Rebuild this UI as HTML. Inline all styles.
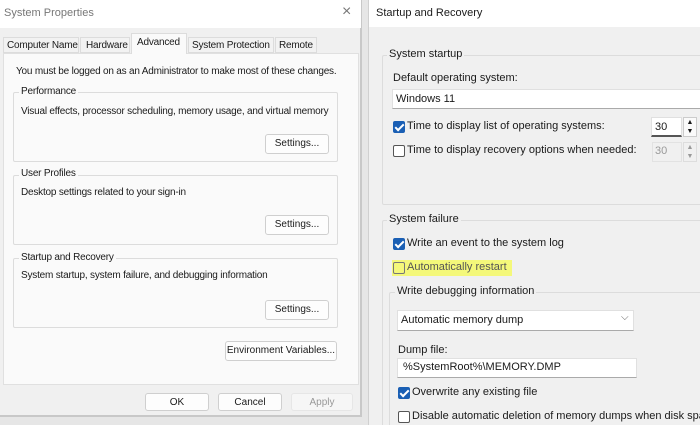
<!DOCTYPE html>
<html style="overflow:hidden;height:425px"><head><style>
*{margin:0;padding:0;box-sizing:border-box}
body{width:700px;height:425px;overflow:hidden;background:#e6e6e6;font-family:"Liberation Sans",sans-serif;position:relative;color:#1a1a1a}
.a{position:absolute;white-space:nowrap}
.l{font-size:10px;letter-spacing:-0.2px}
.r{font-size:11px}
.grp{position:absolute;border:1px solid #dcdcdc;border-radius:2px}
.btn{position:absolute;background:#fdfdfd;border:1px solid #cfcfcf;border-radius:3px;font-size:10px;text-align:center;line-height:17px;white-space:nowrap}
.cb{position:absolute;width:12px;height:12px;border:1px solid #555;border-radius:2px;background:#fff}
.cb.on{background:#1a5fb4;border-color:#1a5fb4}
.cb.on:after{content:"";position:absolute;left:3px;top:0px;width:3px;height:7px;border:solid #fff;border-width:0 2px 2px 0;transform:rotate(45deg)}
.box{position:absolute;background:#fff;border:1px solid #e0e0e0;border-bottom-color:#aaa}
</style></head><body>
<div class="a" style="left:0;top:0;width:362px;height:417px;background:#f0f0f0;border-right:2px solid #c8c8c8;border-bottom:2px solid #c8c8c8"></div>
<div class="a" style="left:0;top:0;width:361px;height:28px;background:#fff"></div>
<div class="a" style="left:4px;top:7px;font-size:11px;color:#777">System Properties</div>
<div class="a" style="left:342px;top:3px;font-size:16px;color:#777">×</div>
<div class="a" style="left:3px;top:53px;width:356px;height:332px;background:#fafafa;border:1px solid #e0e0e0"></div>
<div class="a l" style="left:3px;top:37px;width:76px;height:16px;border:1px solid #dcdcdc;background:#f2f2f2;padding:2px 0 0 3px">Computer Name</div>
<div class="a l" style="left:80px;top:37px;width:50px;height:16px;border:1px solid #dcdcdc;background:#f2f2f2;padding:2px 0 0 5px">Hardware</div>
<div class="a l" style="left:131px;top:33px;width:56px;height:21px;border:1px solid #dcdcdc;border-bottom:none;background:#fafafa;padding:3px 0 0 5px">Advanced</div>
<div class="a l" style="left:188px;top:37px;width:86px;height:16px;border:1px solid #dcdcdc;background:#f2f2f2;padding:2px 0 0 3px">System Protection</div>
<div class="a l" style="left:275px;top:37px;width:42px;height:16px;border:1px solid #dcdcdc;background:#f2f2f2;padding:2px 0 0 3px">Remote</div>
<div class="a l" style="left:16px;top:66px">You must be logged on as an Administrator to make most of these changes.</div>
<div class="grp" style="left:13px;top:92px;width:325px;height:70px"></div>
<div class="a l" style="left:19px;top:86px;background:#fafafa;padding:0 2px">Performance</div>
<div class="a l" style="left:21px;top:106px">Visual effects, processor scheduling, memory usage, and virtual memory</div>
<div class="btn" style="left:265px;top:134px;width:64px;height:20px">Settings...</div>
<div class="grp" style="left:13px;top:175px;width:325px;height:70px"></div>
<div class="a l" style="left:19px;top:168px;background:#fafafa;padding:0 2px">User Profiles</div>
<div class="a l" style="left:21px;top:187px">Desktop settings related to your sign-in</div>
<div class="btn" style="left:265px;top:215px;width:64px;height:20px">Settings...</div>
<div class="grp" style="left:13px;top:258px;width:325px;height:70px"></div>
<div class="a l" style="left:19px;top:252px;background:#fafafa;padding:0 2px">Startup and Recovery</div>
<div class="a l" style="left:21px;top:270px">System startup, system failure, and debugging information</div>
<div class="btn" style="left:265px;top:300px;width:64px;height:20px">Settings...</div>
<div class="btn" style="left:225px;top:341px;width:112px;height:20px">Environment Variables...</div>
<div class="btn" style="left:145px;top:393px;width:64px;height:18px">OK</div>
<div class="btn" style="left:218px;top:393px;width:64px;height:18px">Cancel</div>
<div class="btn" style="left:291px;top:393px;width:62px;height:18px;color:#999;background:#f6f6f6;border-color:#e6e6e6">Apply</div>
<div class="a" style="left:368px;top:0;width:332px;height:425px;background:#f0f0f0;border-left:1px solid #d0d0d0;overflow:hidden">
<div class="a" style="left:0;top:0;width:331px;height:27px;background:#fff"></div>
<div class="a r" style="left:7px;top:7px;font-size:11px">Startup and Recovery</div>
<div class="grp" style="left:13px;top:55px;width:330px;height:150px"></div>
<div class="a r" style="left:18px;top:48px;background:#f0f0f0;padding:0 2px">System startup</div>
<div class="a r" style="left:24px;top:72px">Default operating system:</div>
<div class="box" style="left:23px;top:89px;width:320px;height:20px"></div>
<div class="a r" style="left:27px;top:93px">Windows 11</div>
<div class="cb on" style="left:24px;top:121px"></div>
<div class="a r" style="left:38px;top:120px">Time to display list of operating systems:</div>
<div class="box" style="left:282px;top:117px;width:31px;height:20px;border-bottom:2px solid #555"></div>
<div class="a r" style="left:286px;top:121px">30</div>
<div class="a" style="left:314px;top:117px;width:14px;height:20px;background:#fafafa;border:1px solid #ccc;font-size:7px;line-height:9px;text-align:center">▲<br>▼</div>
<div class="cb" style="left:24px;top:145px"></div>
<div class="a r" style="left:38px;top:144px">Time to display recovery options when needed:</div>
<div class="a" style="left:283px;top:142px;width:30px;height:20px;border:1px solid #e2e2e2"></div>
<div class="a r" style="left:286px;top:145px;color:#999">30</div>
<div class="a" style="left:314px;top:142px;width:14px;height:20px;border:1px solid #ddd;font-size:7px;line-height:9px;text-align:center;color:#999">▲<br>▼</div>
<div class="grp" style="left:13px;top:220px;width:330px;height:220px"></div>
<div class="a r" style="left:18px;top:213px;background:#f0f0f0;padding:0 2px">System failure</div>
<div class="cb on" style="left:24px;top:238px"></div>
<div class="a r" style="left:38px;top:237px">Write an event to the system log</div>
<div class="a" style="left:23px;top:260px;width:120px;height:16px;background:#f4f87a"></div>
<div class="cb" style="left:24px;top:262px;background:#f4f87a;border-color:#777"></div>
<div class="a r" style="left:38px;top:261px;color:#555">Automatically restart</div>
<div class="grp" style="left:20px;top:292px;width:330px;height:150px"></div>
<div class="a r" style="left:26px;top:285px;background:#f0f0f0;padding:0 2px">Write debugging information</div>
<div class="box" style="left:28px;top:310px;width:237px;height:21px"></div>
<div class="a r" style="left:32px;top:314px">Automatic memory dump</div>
<div class="a" style="left:252px;top:312px;font-size:10px;color:#666">⌵</div>
<div class="a r" style="left:29px;top:344px">Dump file:</div>
<div class="box" style="left:28px;top:358px;width:240px;height:20px"></div>
<div class="a r" style="left:34px;top:361px">%SystemRoot%\MEMORY.DMP</div>
<div class="cb on" style="left:29px;top:387px"></div>
<div class="a r" style="left:43px;top:386px">Overwrite any existing file</div>
<div class="cb" style="left:29px;top:411px"></div>
<div class="a r" style="left:43px;top:410px">Disable automatic deletion of memory dumps when disk space</div>
</div>
</body></html>
